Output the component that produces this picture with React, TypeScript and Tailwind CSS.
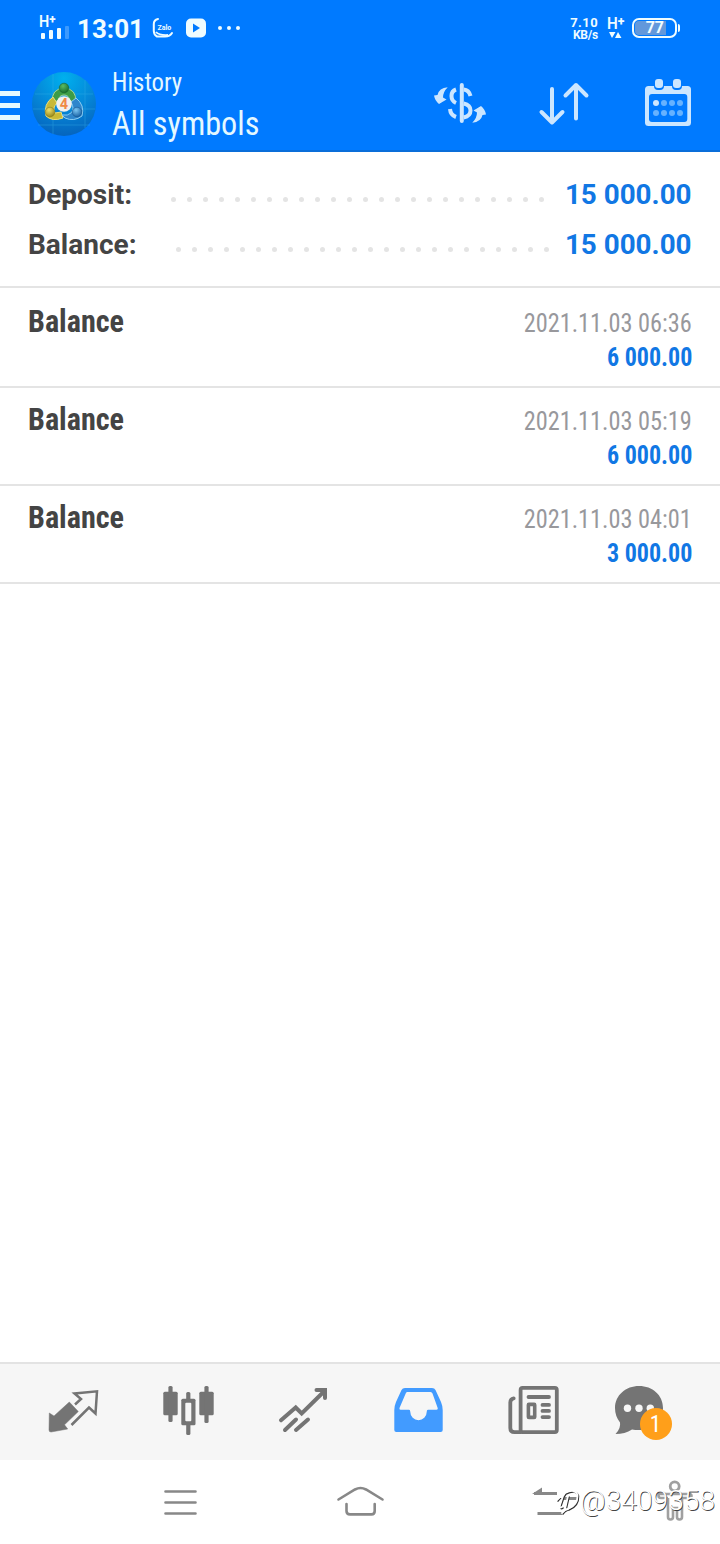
import React from 'react';

interface Operation {
  title: string;
  time: string;
  amount: string;
}

const operations: Operation[] = [
  { title: 'Balance', time: '2021.11.03 06:36', amount: '6 000.00' },
  { title: 'Balance', time: '2021.11.03 05:19', amount: '6 000.00' },
  { title: 'Balance', time: '2021.11.03 04:01', amount: '3 000.00' },
];

const StatusBar: React.FC = () => (
  <div className="flex h-14 items-center justify-between pl-10 pr-10 text-[#effcff]">
    <div className="flex items-center">
      <div className="flex w-[30px] flex-col">
        <span className="ml-[-1px] h-[13px] origin-left scale-x-90 whitespace-nowrap text-[16px] leading-[11px] font-semibold">
          H<sup className="relative -top-1 text-[13px] leading-none font-extrabold">+</sup>
        </span>
        <svg className="mt-[-3px] h-[14px] w-[30px]" viewBox="0 0 30 14" fill="currentColor">
          <rect x="1" y="7" width="4" height="6" rx="1" />
          <rect x="9" y="4" width="4" height="9" rx="1" />
          <rect x="17" y="2" width="4" height="11" rx="1" />
          <rect x="25" y="0" width="4" height="13" rx="1" opacity="0.25" />
        </svg>
      </div>
      <span className="ml-[7px] w-[75px] pt-[2px] text-[26px] leading-[26px] font-bold">13:01</span>
      <svg className="h-[22px] w-[22px]" viewBox="0 0 22 22" fill="none" stroke="currentColor">
        <path d="M6 2Q1.8 3 1.8 7V14Q2 18 5 19.500H13Q18 19.500 20 16" strokeWidth="2" strokeLinecap="round" />
        <path d="M4 15Q7 18.500 16 18" strokeWidth="1.800" />
        <text x="5.500" y="12.500" fontSize="7" fontWeight="700" fill="currentColor" stroke="none">Zalo</text>
      </svg>
      <svg className="ml-3 h-5 w-5" viewBox="0 0 20 20">
        <rect y="0.500" width="20" height="19" rx="5" fill="currentColor" />
        <path d="M7 5.500L14 10L7 14.500Z" fill="#007aff" />
      </svg>
      <svg className="ml-3 h-1 w-6" viewBox="0 0 24 4" fill="currentColor">
        <circle cx="2" cy="2" r="2" />
        <circle cx="11" cy="2" r="2" />
        <circle cx="20" cy="2" r="2" />
      </svg>
    </div>
    <div className="flex items-center">
      <div className="flex w-[28px] flex-col items-end font-bold">
        <span className="text-[13px] leading-[13px] tracking-[0.400px]">7.10</span>
        <span className="text-[12px] leading-[12px] tracking-[-0.200px]">KB/s</span>
      </div>
      <div className="ml-[9px] flex w-[25px] flex-col">
        <span className="h-[14px] origin-left scale-x-95 whitespace-nowrap text-[16px] leading-[13px] font-semibold">
          H<sup className="relative -top-1 text-[13px] leading-none font-extrabold">+</sup>
        </span>
        <svg className="h-2 w-4" viewBox="0 0 16 8" fill="currentColor">
          <path d="M2 1H8.500L5 7ZM8 7H14.500L11 1Z" />
        </svg>
      </div>
      <div className="flex items-center">
        <div className="flex h-5 w-[45px] items-center rounded-[7px] border-2 border-current p-px">
          <div className="flex h-[14px] w-[31px] items-center justify-end rounded-l-[4px] bg-[#6298db] pr-[2px] text-[16px] leading-[14px] font-bold">
            77
          </div>
        </div>
        <div className="ml-px h-2 w-[2px] rounded-r bg-current" />
      </div>
    </div>
  </div>
);

const AppLogo: React.FC = () => (
  <svg className="h-16 w-16" viewBox="0 0 64 64">
    <defs>
      <radialGradient id="sky" cx="0.5" cy="0.1" r="0.95">
        <stop offset="0" stopColor="#00b0ee" />
        <stop offset="0.5" stopColor="#0588d8" />
        <stop offset="1" stopColor="#0560bb" />
      </radialGradient>
      <radialGradient id="green" cx="0.4" cy="0.3" r="0.8">
        <stop offset="0" stopColor="#5cbb62" />
        <stop offset="1" stopColor="#0e6427" />
      </radialGradient>
      <radialGradient id="yellow" cx="0.4" cy="0.3" r="0.8">
        <stop offset="0" stopColor="#efe06a" />
        <stop offset="1" stopColor="#8d7d14" />
      </radialGradient>
      <radialGradient id="blue" cx="0.4" cy="0.3" r="0.8">
        <stop offset="0" stopColor="#7cc6f2" />
        <stop offset="1" stopColor="#0e579c" />
      </radialGradient>
    </defs>
    <circle cx="32" cy="32" r="32" fill="url(#sky)" />
    <path d="M21 2V62M53 8V56M3 22H61M1 37H63M6 53H58" stroke="#3cb4ea" strokeWidth="0.800" opacity="0.450" />
    <path d="M20.500 30Q19 17 32 16Q45 17 43.500 30L38 29Q37 23 32 23Q27 23 26 29Z" fill="#3c9c46" stroke="#a5d49a" strokeWidth="1" />
    <path d="M21 25Q11 32 14 44Q20 50 31 46L29 40L23 41Q20 36 25 31Z" fill="#c9b936" stroke="#e8de7c" strokeWidth="1" />
    <path d="M44 26Q53 33 50 44Q42 50 33 46L30 43Q36 44 39 41Q43 37 39 30Z" fill="#2f86cc" stroke="#8ccdf2" strokeWidth="1" />
    <circle cx="32" cy="16" r="4.800" fill="url(#green)" stroke="#155c2a" strokeWidth="0.500" />
    <circle cx="18" cy="40" r="4.800" fill="url(#yellow)" stroke="#7e7119" strokeWidth="0.500" />
    <circle cx="45" cy="40" r="4.800" fill="url(#blue)" stroke="#124f88" strokeWidth="0.500" />
    <circle cx="32" cy="32" r="7.800" fill="#f1f0ee" />
    <text x="32" y="37.200" textAnchor="middle" fontSize="14.500" fontWeight="700" fill="#ef8a45">4</text>
  </svg>
);

const Header: React.FC = () => (
  <header className="h-[152px] border-b-2 border-[#0a6ed9] bg-[#007aff]">
    <StatusBar />
    <div className="flex h-[94px] items-center pr-6 text-[#e4f8ff]">
      <div className="mt-1 flex w-5 flex-col gap-[7px]">
        <div className="h-[5px] bg-current" />
        <div className="h-[5px] bg-current" />
        <div className="h-[5px] bg-current" />
      </div>
      <div className="ml-[12px] mt-[2px]">
        <AppLogo />
      </div>
      <div className="ml-4 flex flex-1 flex-col pt-1 whitespace-nowrap [font-stretch:75%]">
        <span className="origin-left scale-x-[0.955] text-[26px] leading-9">History</span>
        <span className="origin-left scale-x-[0.948] text-[34px] leading-[46px]">All symbols</span>
      </div>
      <div className="flex gap-12 text-[#cce6ff]">
        <svg className="h-14 w-14" viewBox="0 0 56 56" fill="none" stroke="currentColor" strokeWidth="4">
          <path d="M29.800 10V46" strokeLinecap="round" />
          <path d="M24 14.500Q19.500 16 19.500 21Q19.500 26 24 28M18 34Q18.500 40 24 42M31.700 14.500Q37 15 38.500 21M31.700 28.500Q38.500 30 38.500 35.500Q38.500 41 31.700 42.500" />
          <path
            d="M15.700 12.300Q7 13 5.500 20L2 20.500Q3 26 7 29L14.500 24.500L11 22.500Q11 17 15.700 12.300ZM40.300 47.700Q49 47 50.500 40L54 39.500Q53 34 49 31L41.500 35.500L45 37.500Q45 43 40.300 47.700Z"
            fill="currentColor"
            stroke="none"
          />
        </svg>
        <svg
          className="h-14 w-14"
          viewBox="0 0 56 56"
          fill="none"
          stroke="currentColor"
          strokeWidth="4"
          strokeLinecap="round"
          strokeLinejoin="round"
        >
          <path d="M16 14V47M5.500 37L16 47.500L26.500 37M40 43.500V10M29.500 20.500L40 10L50.500 20.500" />
        </svg>
        <svg className="h-14 w-14" viewBox="0 0 56 56" fill="currentColor">
          <rect x="5" y="11" width="46" height="40" rx="3.500" />
          <rect x="9" y="19" width="38.300" height="28" rx="3" fill="#007aff" />
          <rect x="14" y="3" width="10" height="12" rx="4" fill="#007aff" />
          <rect x="32" y="3" width="10" height="12" rx="4" fill="#007aff" />
          <rect x="15" y="4" width="8" height="9" rx="3" />
          <rect x="33" y="4" width="8" height="9" rx="3" />
          <circle cx="16" cy="28" r="3" />
          <g fill="#66b2ff">
            <circle cx="24" cy="28" r="3" />
            <circle cx="32" cy="28" r="3" />
            <circle cx="40" cy="28" r="3" />
            <circle cx="16" cy="38" r="3" />
            <circle cx="24" cy="38" r="3" />
            <circle cx="32" cy="38" r="3" />
            <circle cx="40" cy="38" r="3" />
          </g>
        </svg>
      </div>
    </div>
  </header>
);

const SummaryRow: React.FC<{ label: string; value: string; labelClass: string }> = ({ label, value, labelClass }) => (
  <div className="flex h-[50px] items-center text-[28px] leading-[50px] font-bold">
    <span className={`shrink-0 pt-[2px] text-[#444] ${labelClass}`}>{label}</span>
    <div className="mt-[11px] flex shrink-0 gap-[11px]">
      {Array.from({ length: 24 }, (_, i) => (
        <span key={i} className="h-[5px] w-[5px] rounded-full bg-[#e4e4e4]" />
      ))}
    </div>
    <span className="ml-auto origin-right scale-x-[0.993] pt-[2px] whitespace-nowrap text-[#1177e4]">{value}</span>
  </div>
);

const OperationRow: React.FC<{ item: Operation }> = ({ item }) => (
  <div className="flex justify-between border-b-2 border-[#e4e4e4] px-7 pt-4 pb-3 whitespace-nowrap [font-stretch:75%] first:pt-[18px]">
    <span className="origin-left scale-x-[0.942] text-[32px] leading-[30px] font-bold text-[#444]">{item.title}</span>
    <div className="flex flex-col items-end text-[26px] leading-[34px]">
      <span className="origin-right scale-x-[0.935] text-[#98989c]">{item.time}</span>
      <span className="origin-right scale-x-[0.925] font-bold text-[#1177e4]">{item.amount}</span>
    </div>
  </div>
);

const TabBar: React.FC = () => (
  <nav className="flex h-[98px] shrink-0 border-t-2 border-[#e3e3e3] bg-[#f6f6f6] pl-4 text-[#747474]">
    <svg className="h-24 w-[115px]" viewBox="0 0 115 96">
      <path
        d="M53.300 38L62.300 47.500L48.500 60.800L51.700 65L35 68Q33 68 33 66L33.300 49L38 52Z"
        fill="currentColor"
        stroke="currentColor"
        strokeWidth="0.500"
        strokeLinejoin="round"
      />
      <path
        d="M59 40.500L65 35L58.500 29.500L81 27.300L79.500 49.500L73 43.500L55.500 61"
        fill="none"
        stroke="currentColor"
        strokeWidth="2.500"
      />
    </svg>
    <svg className="h-24 w-[115px]" viewBox="0 0 115 96" fill="currentColor">
      <rect x="32.300" y="27.700" width="14.400" height="23.600" rx="1.500" />
      <rect x="37.400" y="22" width="4.200" height="36" rx="1.500" />
      <rect x="55.200" y="28" width="4.200" height="43" rx="1.500" />
      <rect x="50.300" y="34.700" width="14.200" height="26.600" rx="1.500" />
      <rect x="54.300" y="38.700" width="6" height="18.500" rx="1" fill="#f6f6f6" />
      <rect x="68.300" y="27.700" width="14.400" height="23.600" rx="1.500" />
      <rect x="73.400" y="22" width="4.200" height="37" rx="1.500" />
    </svg>
    <svg className="h-24 w-[115px]" viewBox="0 0 115 96" fill="none" stroke="currentColor" strokeWidth="4" strokeLinecap="round">
      <path d="M35 56.300L49.700 43.500L55.700 49.500L79 26.500M70.500 26H79V34M39 66L50 55.500M50 66L62 55.500" />
    </svg>
    <svg className="h-24 w-[115px]" viewBox="0 0 115 96" fill="#429bff">
      <path
        fillRule="evenodd"
        d="M44 24H71Q73.500 24 74.500 26L80 38Q81.700 42 81.700 46V66Q81.700 68 79.700 68H35.300Q33.300 68 33.300 66V46Q33.300 42 35 38L40.500 26Q41.500 24 44 24ZM46.500 28Q45.300 28 44.800 29.200L38.500 44Q38 45.700 39.500 45.700H48Q49.300 45.700 49.300 48A8.200 8.200 0 0 0 65.700 48Q65.700 45.700 67 45.700H75.500Q77.300 45.700 76.700 44L71.500 29.500Q71 28 69.500 28Z"
      />
    </svg>
    <svg className="h-24 w-[115px]" viewBox="0 0 115 96" fill="none" stroke="currentColor" strokeWidth="3.800" strokeLinecap="round">
      <rect x="44.600" y="23.900" width="36.200" height="44.200" rx="2" />
      <path d="M37.700 34.300Q34.300 34.800 34.300 38.500V64Q34.300 68.100 38.500 68.100H44.600M52.500 33H73" />
      <rect x="52.400" y="40.400" width="6.300" height="13" rx="0.500" strokeWidth="3.600" />
      <path d="M66.500 40.900H73M66.500 46.900H73M66.500 53.100H73" />
    </svg>
    <div className="relative">
      <svg className="h-24 w-[115px]" viewBox="0 0 115 96" fill="currentColor">
        <path d="M48 22C61.500 22 72 31 72 44C72 57 61 66 48 66Q44 66 41 65.500Q34 70 24.500 70Q30 64.500 29 58.500Q24 52 24 44C24 31 35 22 48 22Z" />
        <g fill="#f6f6f6">
          <circle cx="36.500" cy="44.300" r="3.700" />
          <circle cx="48" cy="44.300" r="3.700" />
          <circle cx="59.300" cy="44.300" r="3.700" />
        </g>
      </svg>
      <span className="absolute top-11 left-[49px] flex h-8 w-8 items-center justify-center rounded-full bg-[#ff9f1a] pr-px text-[23px] leading-none text-white [font-stretch:75%]">
        1
      </span>
    </div>
  </nav>
);

const SystemNav: React.FC = () => (
  <div className="relative flex h-[84px] shrink-0 bg-white text-[#888]">
    <svg className="ml-[150px] h-[84px] w-[60px]" viewBox="150 0 60 84" stroke="currentColor" strokeWidth="2.600" strokeLinecap="round">
      <path d="M165.500 31.500H195.500M165.500 42.500H195.500M165.500 53.500H195.500" />
    </svg>
    <svg className="ml-[120px] h-[84px] w-[60px]" viewBox="330 0 60 84" fill="none" stroke="currentColor" strokeWidth="2.600" strokeLinecap="round">
      <path d="M338.500 39.500L355 29.500Q360.500 26.500 366 29.500L382.500 39.500M346.500 44V51Q346.500 54.400 350 54.400H371.500Q374.700 54.400 374.700 51V44" />
    </svg>
    <svg className="ml-[130px] h-[84px] w-[200px]" viewBox="520 0 200 84" fill="none" stroke="currentColor" strokeWidth="2.800">
      <path d="M534 33.500H557M537.500 53.500H562M561 38.500H577" />
      <path d="M532 34L542 27.500V34Z" fill="currentColor" stroke="none" />
      <circle cx="674.700" cy="26.300" r="4.500" stroke="#a0a0a0" />
      <path
        d="M668 38V57Q668 59.500 670.500 59.500T673 57V48H677V57Q677 59.500 679.500 59.500T682 57V38M668 38H661Q658.500 38 658.500 35.500T661 34H689Q691.500 34 691.500 36T689 38H682"
        stroke="#a0a0a0"
        strokeWidth="2.600"
      />
    </svg>
    <div className="absolute top-[23px] left-[556px] flex items-center text-white">
      <svg className="h-9 w-6" viewBox="0 0 24 36" fill="none" strokeLinecap="round">
        <path
          d="M2 18Q5 14 8 14L5 23Q4 27 7 25M8 14L10 11Q20 6 22.500 13Q23 23 13 27Q10 27 7 31M13 14L10 27"
          stroke="#333"
          strokeWidth="1.600"
        />
        <path
          d="M1 17Q4 13 7 13L4 22Q3 26 6 24M7 13L9 10Q19 5 21.500 12Q22 22 12 26Q9 26 6 30M12 13L9 26"
          stroke="#fff"
          strokeWidth="1.800"
        />
      </svg>
      <span className="text-[28px] leading-9 font-light tracking-[0.100px] [text-shadow:0.8px_0.8px_0_#444]">@3409358</span>
    </div>
  </div>
);

const App: React.FC = () => (
  <div className="flex h-[1544px] w-[720px] flex-col overflow-hidden bg-white font-['Roboto',sans-serif]">
    <Header />
    <section className="border-b-2 border-[#e4e4e4] px-7 py-[17px]">
      <SummaryRow label="Deposit:" value="15 000.00" labelClass="w-[143px]" />
      <SummaryRow label="Balance:" value="15 000.00" labelClass="w-[148px]" />
    </section>
    <main className="flex-1">
      {operations.map((item) => (
        <OperationRow key={item.time} item={item} />
      ))}
    </main>
    <TabBar />
    <SystemNav />
  </div>
);

export default App;
